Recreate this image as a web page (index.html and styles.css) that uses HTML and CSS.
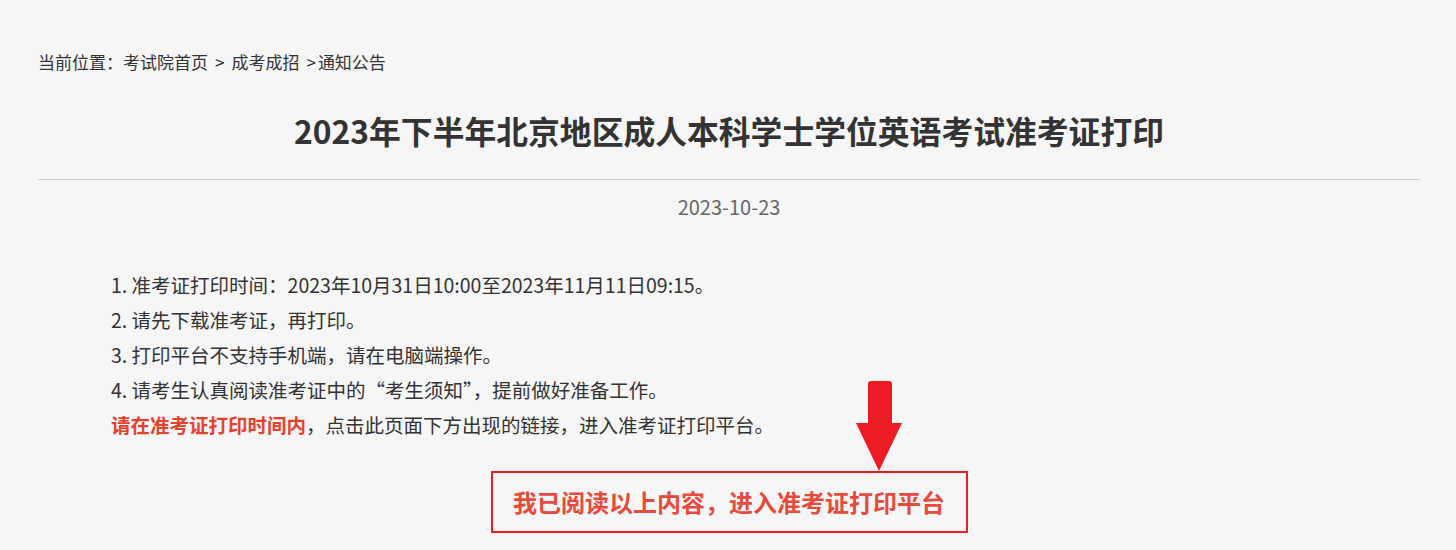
FILE: index.html
```html
<!DOCTYPE html>
<html lang="zh-CN">
<head>
    <meta charset="UTF-8">
    <meta name="viewport" content="width=device-width, initial-scale=1.0">
    <title>2023年下半年北京地区成人本科学士学位英语考试准考证打印</title>
    <link rel="stylesheet" href="styles.css">
</head>
<body>
    <div class="container">
        <div class="breadcrumb">当前位置：<a href="#">考试院首页</a><span class="sep">&gt;</span><a href="#">成考成招</a><span class="sep sep-last">&gt;</span><a href="#">通知公告</a></div>

        <h1 class="title">2023年下半年北京地区成人本科学士学位英语考试准考证打印</h1>
        <div class="date">2023-10-23</div>

        <div class="content">
            <p>1. 准考证打印时间：2023年10月31日10:00至2023年11月11日09:15。</p>
            <p>2. 请先下载准考证，再打印。</p>
            <p>3. 打印平台不支持手机端，请在电脑端操作。</p>
            <p>4. 请考生认真阅读准考证中的“考生须知”，提前做好准备工作。</p>
            <p><strong class="warn">请在准考证打印时间内</strong>，点击此页面下方出现的链接，进入准考证打印平台。</p>
        </div>

        <div class="enter">
            <a class="enter-btn" href="#">我已阅读以上内容，进入准考证打印平台</a>
            <svg class="arrow" width="48" height="90" viewBox="0 0 48 90">
                <path d="M13 3 Q13 0 16 0 H34 Q37 0 37 3 V42 H47 L24 90 L1 42 H13 Z" fill="#ed1c24"/>
            </svg>
        </div>
    </div>
</body>
</html>
```

FILE: styles.css
```css
body {
    margin: 0;
    background-color: #f6f6f6;
    font-family: "Noto Sans CJK SC", "Noto Sans", sans-serif;
    color: #333;
}
a {
    color: #333;
    text-decoration: none;
}
.container {
    padding: 50px 36px 0 38px;
}
.breadcrumb {
    font-size: 17px;
    line-height: 24px;
}
.sep {
    margin: 0 7px;
}
.sep-last {
    margin-right: 2px;
}
.title {
    margin: 0;
    padding: 32px 0 25px;
    font-size: 31.8px;
    line-height: 48px;
    text-align: center;
    color: #333;
    border-bottom: 1px solid #ccc;
}
.date {
    margin-top: 14px;
    font-size: 20px;
    line-height: 26px;
    text-align: center;
    color: #666;
}
.content {
    padding: 47px 0 0 73px;
    font-size: 19.5px;
}
.content p {
    margin: 0;
    line-height: 35px;
}
.warn {
    color: #e8412c;
}
.enter {
    position: relative;
    width: 477px;
    margin: 29px auto 0;
}
.enter-btn {
    display: block;
    height: 58px;
    line-height: 58px;
    border: 2px solid #ee1c25;
    text-align: center;
    font-size: 24px;
    font-weight: bold;
    color: #e84a3c;
}
.arrow {
    position: absolute;
    right: 65px;
    top: -90px;
}
```
